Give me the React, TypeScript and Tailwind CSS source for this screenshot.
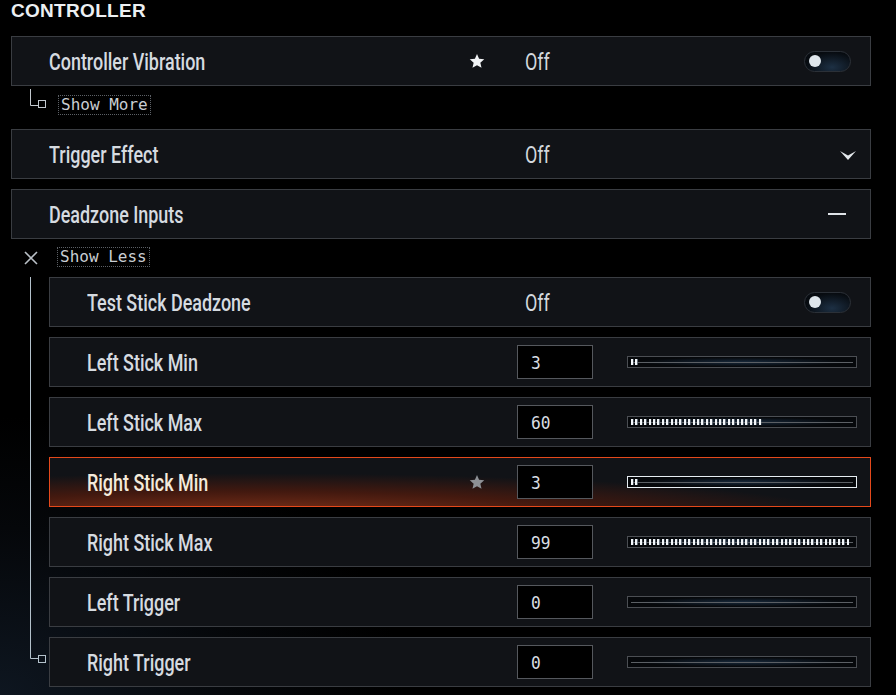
import React from "react";

const labelFont = { fontFamily: '"Liberation Sans Narrow", "Roboto", sans-serif' };

const Star = ({ dim }: { dim?: boolean }) => (
  <svg width="16" height="16" viewBox="0 0 24 24" className={dim ? "text-[#8d9095]" : "text-[#f1f3f5]"}>
    <path fill="currentColor" d="M12 1.5l3.1 7.2 7.8.7-5.9 5.2 1.8 7.7L12 18.3l-6.8 4 1.8-7.7-5.9-5.2 7.8-.7z" />
  </svg>
);

const Toggle = () => (
  <div className="flex h-[21px] w-[47px] items-center rounded-full border-[1.5px] border-[#2b3037] bg-[radial-gradient(ellipse_at_60%_80%,#1d3044_0%,#070b10_70%)] pl-[4px]">
    <div className="h-[12px] w-[12px] rounded-full bg-[#dfe6ec]" />
  </div>
);

const Slider = ({ value, focused }: { value: number; focused?: boolean }) => (
  <div
    className={`relative flex h-[12px] w-[230px] items-center border bg-[radial-gradient(ellipse_at_center,#17283a_0%,#06080b_65%)] px-[3px] ${
      focused ? "border-[#e6edf2]" : "border-[#4b4e53]"
    }`}
  >
    <div className="h-px w-full bg-[#5b5f64]" />
    <div
      className="absolute left-[3px] top-[2px] h-[6px] bg-[repeating-linear-gradient(to_right,#f3f7fa_0px,#f3f7fa_2px,#6b7580_2px,transparent_3.2px,transparent_4.4px)]"
      style={{ width: `${(value / 100) * 220}px` }}
    />
  </div>
);

const NumInput = ({ value }: { value: string }) => (
  <div className="flex h-[34px] w-[76px] items-center border border-[#55585d] bg-black pl-[13px] font-['DejaVu_Sans_Mono',monospace] text-[18px] text-[#d9dee3]">
    <span className="inline-block origin-left scale-x-[0.9]">{value}</span>
  </div>
);

const Off = () => (
  <span className="pl-[8px] pt-[3px] text-[23px] leading-none text-[#d3d8dd]" style={labelFont}>
    <span className="inline-block origin-left scale-x-[0.78]">Off</span>
  </span>
);

type RowProps = {
  label: string;
  star?: boolean;
  highlight?: boolean;
  children: React.ReactNode;
  rightPad: string;
};

const Row = ({ label, star, highlight, children, rightPad }: RowProps) => (
  <div
    className={`flex h-[50px] items-center border ${
      highlight
        ? "border-[#e5491b] bg-[radial-gradient(ellipse_90%_110%_at_25%_120%,#82331a_0%,#43190f_45%,#111317_80%)]"
        : "border-[#3a3d42] bg-[#111317]"
    }`}
  >
    <div
      className={`flex-1 pl-[37px] pt-[2px] text-[23px] font-medium leading-none ${highlight ? "text-[#f4ebdc]" : "text-[#d6dbe0]"}`}
      style={labelFont}
    >
      <span className="inline-block origin-left scale-x-[0.78] whitespace-nowrap">{label}</span>
    </div>
    <div className="mr-[32px] flex w-[16px] justify-center">{star && <Star dim={highlight} />}</div>
    <div className={`flex w-[353px] items-center justify-between ${rightPad}`}>{children}</div>
  </div>
);

const SliderRow = ({ label, value, star, highlight }: { label: string; value: number; star?: boolean; highlight?: boolean }) => (
  <Row label={label} star={star} highlight={highlight} rightPad="pr-[13px]">
    <NumInput value={String(value)} />
    <Slider value={value} focused={highlight} />
  </Row>
);

const ShowBox = ({ text }: { text: string }) => (
  <div className="flex h-[20px] items-center border border-dotted border-[#5c6066] px-[2px] font-['DejaVu_Sans_Mono',monospace] text-[16px] leading-none text-[#c9ced3]">
    {text}
  </div>
);

export default function App() {
  return (
    <div className="h-[695px] w-[896px] overflow-hidden bg-black bg-[radial-gradient(ellipse_45%_40%_at_0%_100%,#0e1620_0%,#05070a_60%,#000_100%)] pl-[11px] pr-[25px]">
      <h1 className="h-[36px] font-['Liberation_Sans',sans-serif] text-[19px] font-bold leading-[22px] tracking-[0.3px] text-[#eceff2]">
        CONTROLLER
      </h1>

      <Row label="Controller Vibration" star rightPad="pr-[19px]">
        <Off />
        <Toggle />
      </Row>

      <div className="flex h-[43px] items-start pl-[19px]">
        <svg width="16" height="20" className="mt-[3px] text-[#c3c9cf]">
          <path d="M0.5 0 V16.5 H8" fill="none" stroke="currentColor" />
          <rect x="8.5" y="11.5" width="7" height="7" fill="none" stroke="currentColor" />
        </svg>
        <div className="ml-[12px] mt-[9px]">
          <ShowBox text="Show More" />
        </div>
      </div>

      <Row label="Trigger Effect" rightPad="pr-[14px]">
        <Off />
        <svg width="16" height="9" viewBox="0 0 16 9" className="mt-[2px] text-[#e4e8ec]">
          <polygon points="0,0 8,4.5 16,0 8,9" fill="currentColor" />
        </svg>
      </Row>

      <div className="mt-[10px]">
        <Row label="Deadzone Inputs" rightPad="pr-[24px]">
          <span />
          <div className="h-[2px] w-[18px] bg-[#dfe3e7]" />
        </Row>
      </div>

      <div className="flex h-[38px] items-start pl-[13px]">
        <svg width="14" height="14" className="mt-[12px] text-[#b9c0c7]">
          <path d="M1 1 L13 13 M13 1 L1 13" stroke="currentColor" strokeWidth="1.6" />
        </svg>
        <div className="ml-[19px] mt-[8px]">
          <ShowBox text="Show Less" />
        </div>
      </div>

      <div className="flex">
        <div className="flex w-[38px] flex-col pl-[19px]">
          <div className="h-[378px] w-px bg-[#b3c1cb]" />
          <svg width="16" height="10" className="text-[#b3c1cb]">
            <path d="M0.5 0 V3.5 H8" fill="none" stroke="currentColor" />
            <rect x="8.5" y="0.5" width="7" height="7" fill="none" stroke="currentColor" />
          </svg>
        </div>
        <div className="flex flex-1 flex-col gap-[10px]">
          <Row label="Test Stick Deadzone" rightPad="pr-[19px]">
            <Off />
            <Toggle />
          </Row>
          <SliderRow label="Left Stick Min" value={3} />
          <SliderRow label="Left Stick Max" value={60} />
          <SliderRow label="Right Stick Min" value={3} star highlight />
          <SliderRow label="Right Stick Max" value={99} />
          <SliderRow label="Left Trigger" value={0} />
          <SliderRow label="Right Trigger" value={0} />
        </div>
      </div>
    </div>
  );
}
